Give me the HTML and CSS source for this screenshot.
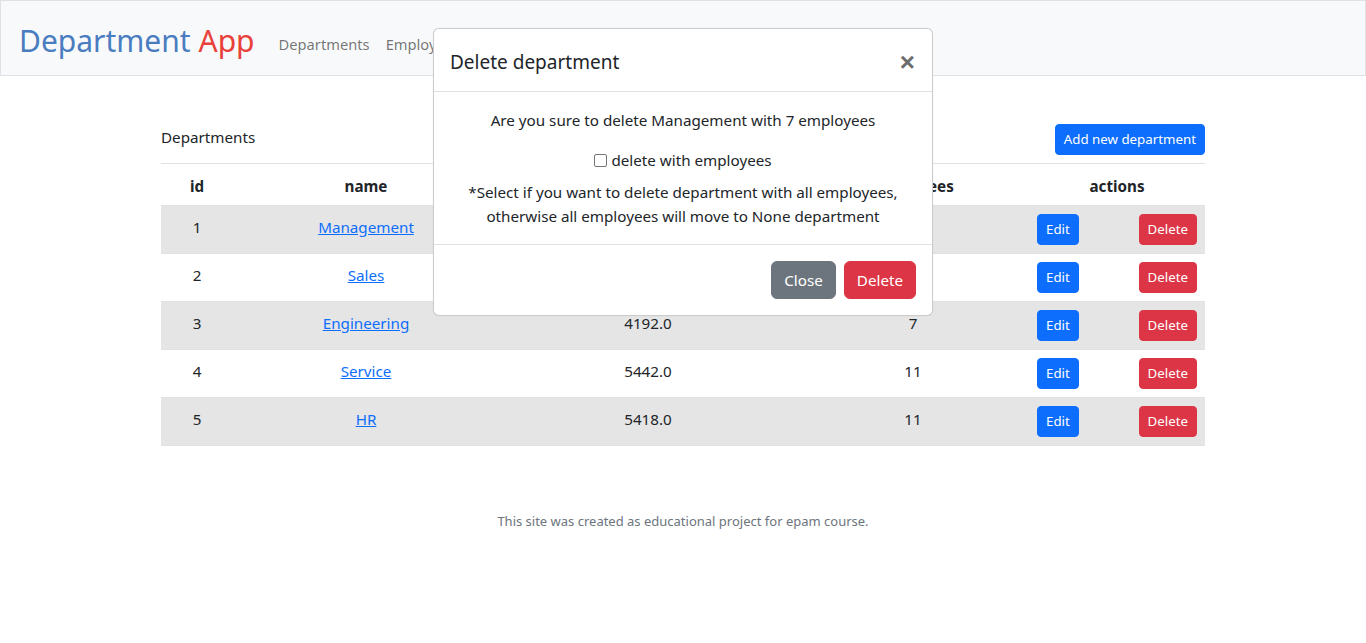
FILE: index.html
```html
<!DOCTYPE html>
<html lang="en">
<head>
<meta charset="utf-8">
<title>Department App</title>
<link rel="stylesheet" href="styles.css">
</head>
<body>
<nav class="navbar">
  <a class="brand" href="#"><span class="brand-blue">Department</span> <span class="brand-red">App</span></a>
  <ul class="nav-links">
    <li><a href="#">Departments</a></li>
    <li><a href="#">Employees</a></li>
  </ul>
</nav>

<main class="container">
  <div class="toolbar">
    <div class="title">Departments</div>
    <button class="btn btn-sm btn-primary">Add new department</button>
  </div>
  <table class="table">
    <colgroup>
      <col class="c-id"><col class="c-name"><col class="c-salary"><col class="c-emp"><col class="c-act">
    </colgroup>
    <thead>
      <tr><th>id</th><th>name</th><th>average salary</th><th>employees</th><th>actions</th></tr>
    </thead>
    <tbody>
      <tr class="odd"><td>1</td><td><a href="#">Management</a></td><td>4815.0</td><td>7</td><td class="act"><div class="actions"><button class="btn btn-sm btn-primary">Edit</button><button class="btn btn-sm btn-danger">Delete</button></div></td></tr>
      <tr><td>2</td><td><a href="#">Sales</a></td><td>4500.0</td><td>9</td><td class="act"><div class="actions"><button class="btn btn-sm btn-primary">Edit</button><button class="btn btn-sm btn-danger">Delete</button></div></td></tr>
      <tr class="odd"><td>3</td><td><a href="#">Engineering</a></td><td>4192.0</td><td>7</td><td class="act"><div class="actions"><button class="btn btn-sm btn-primary">Edit</button><button class="btn btn-sm btn-danger">Delete</button></div></td></tr>
      <tr><td>4</td><td><a href="#">Service</a></td><td>5442.0</td><td>11</td><td class="act"><div class="actions"><button class="btn btn-sm btn-primary">Edit</button><button class="btn btn-sm btn-danger">Delete</button></div></td></tr>
      <tr class="odd"><td>5</td><td><a href="#">HR</a></td><td>5418.0</td><td>11</td><td class="act"><div class="actions"><button class="btn btn-sm btn-primary">Edit</button><button class="btn btn-sm btn-danger">Delete</button></div></td></tr>
    </tbody>
  </table>
</main>

<footer class="footer">This site was created as educational project for epam course.</footer>

<div class="modal">
  <div class="modal-header">
    <h5 class="modal-title">Delete department</h5>
    <button class="close" aria-label="Close">&times;</button>
  </div>
  <div class="modal-body">
    <p class="question">Are you sure to delete Management with 7 employees</p>
    <label class="check"><span class="box"></span> delete with employees</label>
    <p class="note">*Select if you want to delete department with all employees, otherwise all employees will move to None department</p>
  </div>
  <div class="modal-footer">
    <button class="btn btn-secondary">Close</button>
    <button class="btn btn-danger">Delete</button>
  </div>
</div>
</body>
</html>
```

FILE: styles.css
```css
* { box-sizing: border-box; }
html, body { margin: 0; padding: 0; }
body {
  font-family: "Noto Sans", "Open Sans", sans-serif;
  font-size: 15.2px;
  line-height: 24px;
  color: #212529;
  background: #fff;
  position: relative;
  min-height: 643px;
}
.navbar {
  display: flex;
  align-items: center;
  height: 76px;
  padding: 6px 16px 0 18px;
  background: #f8f9fa;
  border: 1px solid #dee2e6;
}
.brand {
  font-size: 30px;
  text-decoration: none;
  margin-right: 24px;
  line-height: 1;
}
.brand-blue { color: #4a7cc0; }
.brand-red { color: #e8403a; }
.nav-links {
  display: flex;
  list-style: none;
  margin: 6px 0 0;
  padding: 0;
  gap: 16px;
  font-size: 14.7px;
}
.nav-links a {
  color: rgba(0,0,0,.55);
  text-decoration: none;
}
.container {
  width: 1044px;
  margin: 48px auto 0;
}
.toolbar {
  display: flex;
  justify-content: space-between;
  align-items: flex-end;
  padding-bottom: 8px;
  border-bottom: 1px solid #dee2e6;
}
.title { padding-bottom: 6px; }
.btn {
  font-family: inherit;
  border: 1px solid transparent;
  border-radius: 6px;
  color: #fff;
  font-size: 15.2px;
  line-height: 24px;
  padding: 6px 12px;
  cursor: pointer;
}
.btn-sm {
  font-size: 13.3px;
  line-height: 21px;
  padding: 4px 8px;
  border-radius: 4px;
}
.btn-primary { background: #0d6efd; border-color: #0d6efd; }
.btn-danger { background: #dc3545; border-color: #dc3545; }
.btn-secondary { background: #6c757d; border-color: #6c757d; }
.table {
  width: 100%;
  border-collapse: collapse;
  table-layout: fixed;
  text-align: center;
}
.c-id { width: 72px; }
.c-name { width: 266px; }
.c-salary { width: 298px; }
.c-emp { width: 232px; }
.c-act { width: 176px; }
.table th, .table td {
  padding: 6px 8px 10px;
  border-bottom: 1px solid #dee2e6;
  vertical-align: middle;
}
.table td.act { padding: 8px; }
.table th { font-weight: 700; height: 41px; padding-top: 10px; padding-bottom: 6px; }
.table td { height: 48px; }
.table tr.odd td { background: #e5e5e5; }
.table a { color: #0d6efd; }
.actions {
  display: flex;
  justify-content: space-between;
}
.footer {
  text-align: center;
  font-size: 13px;
  color: #6c757d;
  margin-top: 63px;
}
.modal {
  position: absolute;
  top: 28px;
  left: 433px;
  width: 500px;
  background: #fff;
  border: 1px solid rgba(0,0,0,.2);
  border-radius: 6px;
  box-shadow: 0 0 2px rgba(0,0,0,.05);
}
.modal-header {
  display: flex;
  align-items: center;
  justify-content: space-between;
  padding: 16px;
  height: 63px;
  border-bottom: 1px solid #dee2e6;
}
.modal-title {
  margin: 0;
  padding-top: 4px;
  font-size: 19px;
  font-weight: 400;
  line-height: 1.5;
}
.close {
  background: none;
  border: 0;
  font-size: 26px;
  font-weight: 700;
  color: #6c6c6c;
  padding: 3px 0 0;
  line-height: 1;
  margin-right: 1px;
}
.modal-body {
  padding: 16px;
  text-align: center;
}
.question { margin: 0 0 16px; }
.check {
  display: flex;
  justify-content: center;
  align-items: center;
  gap: 4px;
  margin-bottom: 8px;
}
.box {
  width: 13px;
  height: 13px;
  border: 1px solid #767676;
  border-radius: 2px;
  background: #fff;
}
.note { margin: 0; }
.modal-footer {
  display: flex;
  justify-content: flex-end;
  padding: 12px;
  border-top: 1px solid #dee2e6;
}
.modal-footer .btn { margin: 4px; }
```
